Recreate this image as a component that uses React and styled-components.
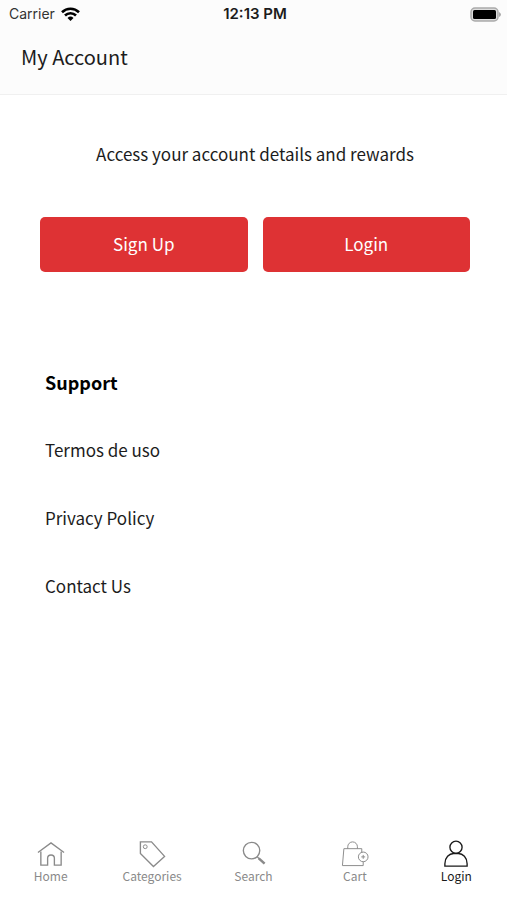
import React from "react";
import styled, { createGlobalStyle } from "styled-components";

const GlobalStyle = createGlobalStyle`
  * {
    box-sizing: border-box;
  }

  body {
    margin: 0;
    background: #fff;
    color: #1c1c1c;
    font-family: "Noto Sans CJK SC", "Noto Sans", sans-serif;
  }
`;

const Screen = styled.div`
  display: flex;
  flex-direction: column;
  min-height: 100vh;
`;

const Header = styled.header`
  background: #fcfcfc;
  border-bottom: 1px solid #f0f0f0;
`;

const StatusBar = styled.div`
  display: grid;
  grid-template-columns: 1fr auto 1fr;
  align-items: center;
  height: 28px;
  padding: 0 6px 0 9px;
  font-family: Inter, sans-serif;
  font-size: 14px;
  line-height: 20px;
`;

const Carrier = styled.div`
  display: flex;
  align-items: center;
  gap: 6px;
  color: #333;
`;

const Time = styled.div`
  font-size: 15px;
  font-weight: 600;
`;

const Battery = styled.svg`
  justify-self: end;
`;

const Title = styled.h1`
  margin: 0;
  padding: 16px 21px 24px;
  font-size: 20px;
  font-weight: 400;
  line-height: 26px;
`;

const Main = styled.main`
  flex: 1;
  padding: 47px 37px 0 40px;
`;

const Intro = styled.p`
  margin: 0;
  font-size: 17px;
  line-height: 24px;
  text-align: center;
`;

const Actions = styled.div`
  display: flex;
  gap: 15px;
  margin-top: 51px;
`;

const ActionButton = styled.button`
  flex: 1;
  height: 55px;
  padding: 0 0 2px;
  border: none;
  border-radius: 5px;
  background: #de3234;
  color: #fff;
  font-family: inherit;
  font-size: 17px;
  line-height: 24px;
  cursor: pointer;
`;

const Support = styled.section`
  padding: 97px 5px 0;
`;

const SupportTitle = styled.h2`
  margin: 0;
  color: #000;
  font-size: 18px;
  font-weight: 700;
  line-height: 26px;
`;

const LinkList = styled.ul`
  display: flex;
  flex-direction: column;
  gap: 44px;
  margin: 0;
  padding: 43px 0 0;
  list-style: none;
`;

const SupportLink = styled.a`
  display: block;
  color: inherit;
  font-size: 17px;
  line-height: 24px;
  text-decoration: none;
`;

const TabBar = styled.nav`
  display: grid;
  grid-template-columns: repeat(5, 1fr);
  padding: 0 0 16px;
`;

const Tab = styled.a`
  display: flex;
  flex-direction: column;
  align-items: center;
  color: ${({ $active }) => ($active ? "#1a1a1a" : "#8a8a8a")};
  font-size: 12px;
  line-height: 16px;
  text-decoration: none;

  svg {
    fill: none;
    stroke: currentColor;
    stroke-width: 1.4;
  }
`;

const tabs = [
  {
    label: "Home",
    icon: (
      <>
        <path d="M2 14 15.5 4 29 14" />
        <path d="M5 13v14h7v-7a3.5 3.5 0 0 1 7 0v7h7V13" />
      </>
    ),
  },
  {
    label: "Categories",
    icon: (
      <>
        <path d="M3.500 3H15l13.500 15L17 28.500 3.500 15Z" />
        <circle cx="8.500" cy="8" r="2" strokeWidth="1" />
      </>
    ),
  },
  {
    label: "Search",
    icon: (
      <>
        <circle cx="14" cy="12" r="8.500" />
        <path d="m20 18.500 2 2" />
        <path d="m21.500 20 6 5.500" strokeWidth="2.600" />
      </>
    ),
  },
  {
    label: "Cart",
    icon: (
      <g strokeWidth="1">
        <path d="M22.500 14.500V10H4L2.500 27.500H24V23.500" />
        <path d="M8 10V8a5 5 0 0 1 10 0v2" />
        <circle cx="24" cy="18.500" r="5" />
        <path d="M22 18.500h4M24 16.500v4" />
      </g>
    ),
  },
  {
    label: "Login",
    active: true,
    icon: (
      <>
        <circle cx="15.500" cy="8.500" r="6.300" />
        <path d="M4 28v-2.500C4 19 8.500 15 13 15h5c4.500 0 9 4 9 10.500V28Z" />
      </>
    ),
  },
];

export default function App() {
  return (
    <>
      <GlobalStyle />
      <Screen>
        <Header>
          <StatusBar>
            <Carrier>
              Carrier
              <svg width="19" height="14" viewBox="0 0 19 14" fill="none" stroke="#000" strokeWidth="2.6">
                <path d="M1 5.200a12.200 12.200 0 0 1 17 0" />
                <path d="M4 8.500a7.800 7.800 0 0 1 11 0" />
                <path d="M9.500 14 6.500 11a4.300 4.300 0 0 1 6 0Z" fill="#000" stroke="none" />
              </svg>
            </Carrier>
            <Time>12:13 PM</Time>
            <Battery width="31" height="15" viewBox="0 0 31 15">
              <rect x="1" y="1" width="27" height="13" rx="4" fill="#ddd" stroke="#aaa" strokeWidth="1.500" />
              <rect x="3" y="3" width="23" height="9" rx="1.500" fill="#000" />
              <path d="M29 5q2 1 2 2.500T29 10Z" fill="#aaa" />
            </Battery>
          </StatusBar>
          <Title>My Account</Title>
        </Header>

        <Main>
          <Intro>Access your account details and rewards</Intro>
          <Actions>
            <ActionButton type="button">Sign Up</ActionButton>
            <ActionButton type="button">Login</ActionButton>
          </Actions>

          <Support>
            <SupportTitle>Support</SupportTitle>
            <LinkList>
              <li>
                <SupportLink href="#terms">Termos de uso</SupportLink>
              </li>
              <li>
                <SupportLink href="#privacy">Privacy Policy</SupportLink>
              </li>
              <li>
                <SupportLink href="#contact">Contact Us</SupportLink>
              </li>
            </LinkList>
          </Support>
        </Main>

        <TabBar>
          {tabs.map(({ label, icon, active }) => (
            <Tab
              key={label}
              href={`#${label.toLowerCase()}`}
              $active={active}
              aria-current={active ? "page" : undefined}
            >
              <svg width="30" height="29" viewBox="0 0 31 30" aria-hidden="true">
                {icon}
              </svg>
              {label}
            </Tab>
          ))}
        </TabBar>
      </Screen>
    </>
  );
}
